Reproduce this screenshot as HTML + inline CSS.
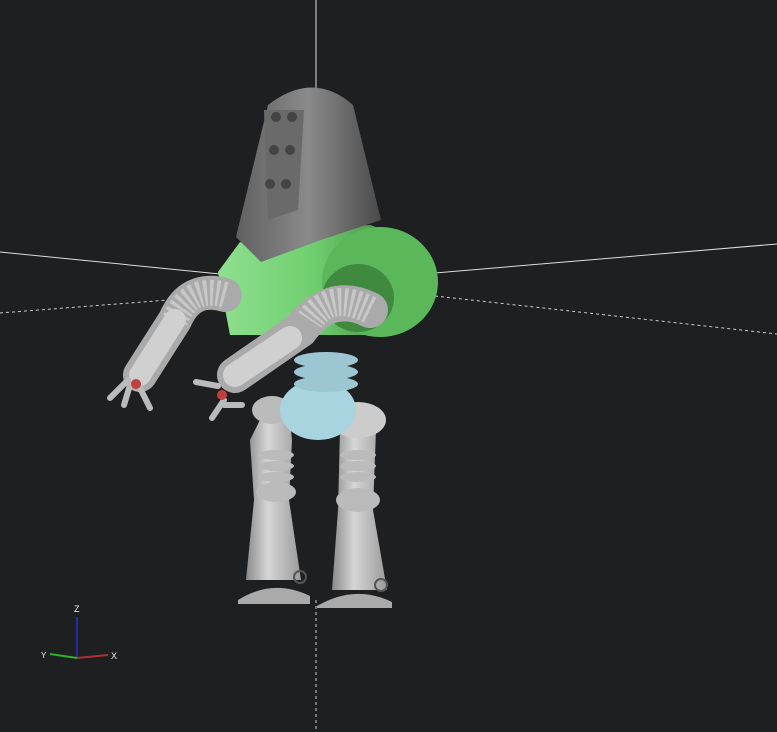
<!DOCTYPE html>
<html><head><style>html,body{margin:0;padding:0;background:#1e1f21;width:777px;height:732px;overflow:hidden}</style></head>
<body>
<svg width="777" height="732" viewBox="0 0 777 732" xmlns="http://www.w3.org/2000/svg">
<rect width="777" height="732" fill="#1e1f21"/>
<defs>
<linearGradient id="g" x1="0" x2="1"><stop offset="0" stop-color="#8a8a8a"/><stop offset="0.4" stop-color="#d6d6d6"/><stop offset="1" stop-color="#9a9a9a"/></linearGradient>
<linearGradient id="gr" x1="0" x2="1"><stop offset="0" stop-color="#8fe08f"/><stop offset="0.5" stop-color="#6fcf6f"/><stop offset="1" stop-color="#3f7f3f"/></linearGradient>
<linearGradient id="hd" x1="0" x2="1"><stop offset="0" stop-color="#606060"/><stop offset="0.5" stop-color="#8a8a8a"/><stop offset="1" stop-color="#4a4a4a"/></linearGradient>
</defs>
<line x1="316" y1="0" x2="316" y2="90" stroke="#ddd"/>
<line x1="0" y1="252" x2="220" y2="274" stroke="#ddd"/>
<line x1="435" y1="273" x2="777" y2="244" stroke="#ddd"/>
<line x1="0" y1="313" x2="220" y2="296" stroke="#ccc" stroke-dasharray="3,3"/>
<line x1="435" y1="296" x2="777" y2="334" stroke="#ccc" stroke-dasharray="3,3"/>
<line x1="316" y1="600" x2="316" y2="732" stroke="#ccc" stroke-dasharray="3,3"/>
<!-- legs -->
<path d="M260 420h30l2 20 -3 60 12 80 h-55 l8-80 -4-60z" fill="url(#g)"/>
<g fill="#bbb"><ellipse cx="276" cy="455" rx="18" ry="5"/><ellipse cx="276" cy="466" rx="18" ry="5"/><ellipse cx="276" cy="477" rx="18" ry="5"/><ellipse cx="276" cy="492" rx="20" ry="10"/></g>
<path d="M238 600 q35-22 72 -4 v8 h-72z" fill="#aaa"/>
<path d="M340 430h36l-3 80 14 80 h-55 l6-80z" fill="url(#g)"/>
<g fill="#bbb"><ellipse cx="358" cy="455" rx="18" ry="5"/><ellipse cx="358" cy="466" rx="18" ry="5"/><ellipse cx="358" cy="477" rx="18" ry="5"/><ellipse cx="358" cy="500" rx="22" ry="12"/></g>
<path d="M317 606 q38-22 75 -4 v6 h-75z" fill="#aaa"/>
<circle cx="300" cy="577" r="6" fill="none" stroke="#555" stroke-width="2"/>
<circle cx="381" cy="585" r="6" fill="none" stroke="#555" stroke-width="2"/>
<ellipse cx="358" cy="420" rx="28" ry="18" fill="#ccc"/>
<ellipse cx="272" cy="410" rx="20" ry="14" fill="#bbb"/>
<!-- pelvis -->
<ellipse cx="318" cy="410" rx="38" ry="30" fill="#a8d4e0"/>
<g fill="#9cc6d2"><ellipse cx="326" cy="360" rx="32" ry="8"/><ellipse cx="326" cy="372" rx="32" ry="8"/><ellipse cx="326" cy="384" rx="32" ry="8"/></g>
<!-- body -->
<path d="M218 272 l22-30 30 10 40-22 60 -5 30 10 10 60 -40 40 -140 0 z" fill="url(#gr)"/>
<ellipse cx="380" cy="282" rx="58" ry="55" fill="#5ab85a"/>
<ellipse cx="358" cy="298" rx="36" ry="34" fill="#3f8a3f"/>
<!-- head -->
<path d="M268 105 q45-35 85 0 l28 115 -60 20 -60 22 -25 -25z" fill="url(#hd)"/>
<path d="M264 110 l40 0 -6 100 -30 10z" fill="#6a6a6a"/>
<g fill="#444"><circle cx="276" cy="117" r="5"/><circle cx="292" cy="117" r="5"/><circle cx="274" cy="150" r="5"/><circle cx="290" cy="150" r="5"/><circle cx="270" cy="184" r="5"/><circle cx="286" cy="184" r="5"/></g>
<!-- left arm -->
<path d="M225 295 Q190 285 175 320 L140 375" stroke="#aaa" stroke-width="34" fill="none" stroke-linecap="round"/>
<path d="M225 295 Q190 285 175 320" stroke="#c8c8c8" stroke-width="26" fill="none" stroke-dasharray="3,3"/>
<path d="M175 320 L140 375" stroke="#d0d0d0" stroke-width="22" fill="none" stroke-linecap="round"/>
<path d="M110 398 l18 -18 M130 385 l-6 20 M140 388 l10 20" stroke="#bbb" stroke-width="6" stroke-linecap="round"/>
<circle cx="136" cy="384" r="5" fill="#c04040"/>
<!-- right arm -->
<path d="M370 310 Q330 290 300 330 L235 375" stroke="#aaa" stroke-width="36" fill="none" stroke-linecap="round"/>
<path d="M370 310 Q330 290 310 320" stroke="#c8c8c8" stroke-width="28" fill="none" stroke-dasharray="3,3"/>
<path d="M290 338 L235 375" stroke="#d0d0d0" stroke-width="24" fill="none" stroke-linecap="round"/>
<path d="M196 382 l22 4 M212 418 l12 -18 M224 405 l18 0" stroke="#bbb" stroke-width="6" stroke-linecap="round"/>
<circle cx="222" cy="395" r="5" fill="#c04040"/>
<!-- axis indicator -->
<line x1="77" y1="617" x2="77" y2="658" stroke="#2a2aa0" stroke-width="2"/>
<path d="M77 658 L108 655" stroke="#b03030" stroke-width="2"/>
<path d="M77 658 L50 654" stroke="#30b030" stroke-width="2"/>
<text x="74" y="612" fill="#eee" font-family="Liberation Sans,sans-serif" font-size="9">Z</text>
<text x="111" y="659" fill="#eee" font-family="Liberation Sans,sans-serif" font-size="9">X</text>
<text x="41" y="658" fill="#eee" font-family="Liberation Sans,sans-serif" font-size="8">Y</text>
</svg>
</body></html>
